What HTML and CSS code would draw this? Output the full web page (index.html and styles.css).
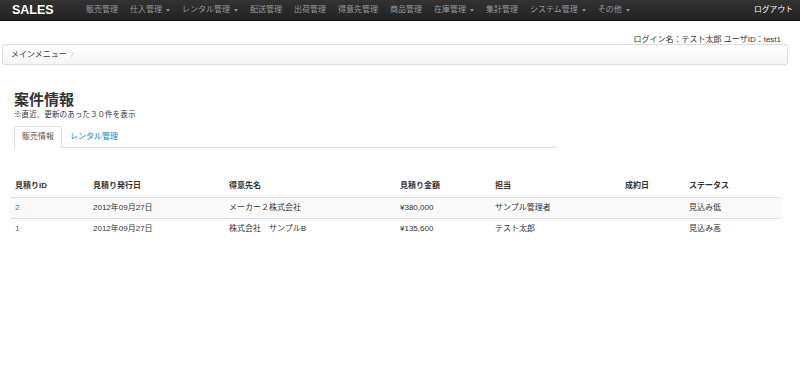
FILE: index.html
```html
<!DOCTYPE html>
<html lang="ja">
<head>
    <meta charset="UTF-8">
    <title>案件情報</title>
    <link rel="stylesheet" href="styles.css">
</head>
<body>

    <div class="navbar">
        <a class="brand" href="#">SALES</a>
        <ul class="nav">
            <li><a href="#">販売管理</a></li>
            <li><a href="#">仕入管理<b class="caret"></b></a></li>
            <li><a href="#">レンタル管理<b class="caret"></b></a></li>
            <li><a href="#">配送管理</a></li>
            <li><a href="#">出荷管理</a></li>
            <li><a href="#">得意先管理</a></li>
            <li><a href="#">商品管理</a></li>
            <li><a href="#">在庫管理<b class="caret"></b></a></li>
            <li><a href="#">集計管理</a></li>
            <li><a href="#">システム管理<b class="caret"></b></a></li>
            <li><a href="#">その他<b class="caret"></b></a></li>
        </ul>
        <a class="logout" href="#">ログアウト</a>
    </div>

    <div class="login">ログイン名：テスト太郎 ユーザID：test1</div>

    <ul class="breadcrumb">
        <li>メインメニュー <span class="divider">/</span></li>
    </ul>

    <div class="page">
        <h1>案件情報</h1>
        <p class="note">※直近、更新のあった３０件を表示</p>

        <ul class="tabs">
            <li class="active"><a href="#">販売情報</a></li>
            <li><a href="#">レンタル管理</a></li>
        </ul>
    </div>

    <table class="table">
        <thead>
            <tr>
                <th class="c1">見積りID</th>
                <th class="c2">見積り発行日</th>
                <th class="c3">得意先名</th>
                <th class="c4">見積り金額</th>
                <th class="c5">担当</th>
                <th class="c6">成約日</th>
                <th class="c7">ステータス</th>
            </tr>
        </thead>
        <tbody>
            <tr>
                <td><a href="#">2</a></td>
                <td>2012年09月27日</td>
                <td>メーカー２株式会社</td>
                <td>¥380,000</td>
                <td>サンプル管理者</td>
                <td></td>
                <td>見込み低</td>
            </tr>
            <tr>
                <td><a href="#">1</a></td>
                <td>2012年09月27日</td>
                <td>株式会社　サンプルB</td>
                <td>¥135,600</td>
                <td>テスト太郎</td>
                <td></td>
                <td>見込み高</td>
            </tr>
        </tbody>
    </table>

</body>
</html>
```

FILE: styles.css
```css
body {
    margin: 0;
    font-family: "Liberation Sans", "Noto Sans CJK JP", sans-serif;
    font-size: 8px;
    line-height: 12px;
    color: #333;
    background: #fff;
}

a {
    color: #0088cc;
    text-decoration: none;
}

ul {
    list-style-type: none;
    margin: 0;
    padding: 0;
}

/* navbar */

.navbar {
    display: flex;
    align-items: center;
    height: 21px;
    background: linear-gradient(#333, #222);
    border-bottom: 1px solid #111;
    box-sizing: border-box;
}

.navbar .brand {
    width: 68px;
    padding-left: 12px;
    color: #fff;
    font-size: 12.5px;
    font-weight: bold;
}

.nav {
    display: flex;
    flex: 1;
}

.nav li a {
    display: flex;
    align-items: center;
    padding: 0 6px;
    color: #999;
}

.caret {
    width: 0;
    height: 0;
    margin-left: 4px;
    border-top: 3px solid #888;
    border-left: 2.5px solid transparent;
    border-right: 2.5px solid transparent;
}

.navbar .logout {
    padding-right: 7px;
    color: #fff;
    font-size: 7.8px;
}

/* login / breadcrumb */

.login {
    margin-top: 13px;
    padding-right: 19px;
    text-align: right;
}

.breadcrumb {
    display: flex;
    align-items: center;
    height: 21px;
    margin: -2px 12px 0 2px;
    padding: 0 8px;
    box-sizing: border-box;
    background: linear-gradient(#fff, #f5f5f5);
    border: 1px solid #ddd;
    border-radius: 2px;
}

.breadcrumb .divider {
    padding: 0 2px;
    color: #ccc;
}

/* heading and tabs */

.page {
    padding-left: 14px;
}

.page h1 {
    margin: 26px 0 0;
    font-size: 15px;
    line-height: 18px;
    font-weight: bold;
}

.page .note {
    margin: 1px 0 0;
    font-size: 7.6px;
    line-height: 10px;
}

.tabs {
    display: flex;
    width: 543px;
    margin-top: 6px;
    border-bottom: 1px solid #ddd;
}

.tabs li {
    margin-bottom: -1px;
}

.tabs li a {
    display: block;
    height: 20px;
    line-height: 20px;
    padding: 0 7px;
    border: 1px solid transparent;
    border-bottom: none;
    border-radius: 2px 2px 0 0;
}

.tabs li.active a {
    color: #555;
    background: #fff;
    border-color: #ddd;
    height: 21px;
}

/* table */

.table {
    width: 771px;
    margin: 28px 0 0 10px;
    border-collapse: collapse;
}

.table th,
.table td {
    height: 21px;
    padding: 0 5px;
    text-align: left;
    border-top: 1px solid #ddd;
    box-sizing: border-box;
}

.table thead th {
    border-top: none;
    font-weight: bold;
}

.table tbody tr:nth-child(odd) td {
    background-color: #f9f9f9;
}

.c1 { width: 78px; }
.c2 { width: 136px; }
.c3 { width: 171px; }
.c4 { width: 95px; }
.c5 { width: 130px; }
.c6 { width: 64px; }
```
